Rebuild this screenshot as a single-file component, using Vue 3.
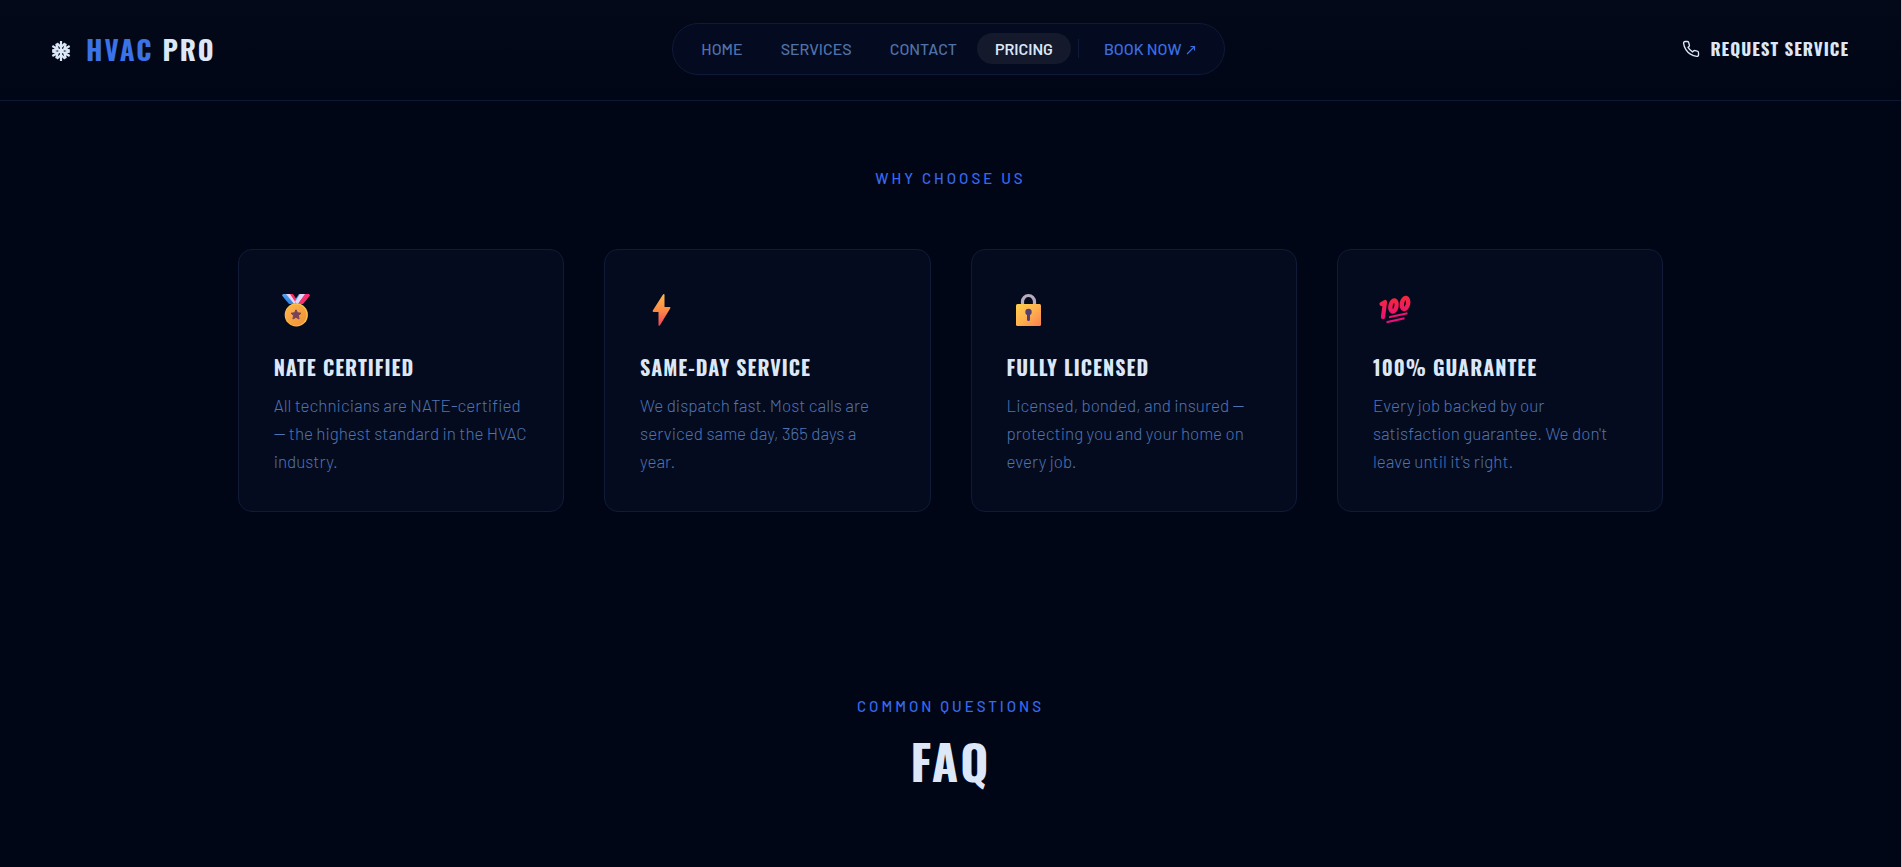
<template>
  <div class="page">
    <header class="site-header">
      <a href="#" class="logo">
        <svg class="logo-icon" viewBox="0 0 22 22" aria-hidden="true">
          <g v-for="a in 6" :key="a" :transform="`rotate(${a * 60} 11 11)`">
            <path d="M11 11V1M11 7.200L7 3.200M11 7.200l4-4" />
          </g>
        </svg>
        <span class="logo-text"><span class="accent">HVAC</span> PRO</span>
      </a>

      <nav class="nav-pill">
        <a
          v-for="link in links"
          :key="link"
          href="#"
          class="nav-link"
          :class="{ active: link === current }"
          @click.prevent="current = link"
        >{{ link }}</a>
        <span class="nav-divider"></span>
        <a href="#" class="nav-link book">
          BOOK NOW
          <svg class="arrow" viewBox="0 0 10 10" aria-hidden="true">
            <path d="M1 9L8.500 1.500M4.500 1.500h4v4" />
          </svg>
        </a>
      </nav>

      <a href="#" class="request">
        <svg class="phone" viewBox="0 0 24 24" aria-hidden="true">
          <path d="M22 16.920v3a2 2 0 0 1-2.180 2 19.790 19.790 0 0 1-8.630-3.070 19.500 19.500 0 0 1-6-6 19.790 19.790 0 0 1-3.070-8.670A2 2 0 0 1 4.110 2h3a2 2 0 0 1 2 1.720 12.840 12.840 0 0 0 .7 2.810 2 2 0 0 1-.45 2.110L8.090 9.910a16 16 0 0 0 6 6l1.270-1.270a2 2 0 0 1 2.110-.45 12.840 12.840 0 0 0 2.810.7A2 2 0 0 1 22 16.920z" />
        </svg>
        REQUEST SERVICE
      </a>
    </header>

    <main>
      <section class="why">
        <p class="eyebrow">WHY CHOOSE US</p>
        <div class="cards">
          <article v-for="card in cards" :key="card.title" class="card">
            <svg v-if="card.icon === 'medal'" class="card-icon" viewBox="0 0 44 44" aria-hidden="true">
              <defs>
                <linearGradient id="ribbonBlue" x1="0" y1="0" x2="0" y2="1">
                  <stop offset="0" stop-color="#4fa4f5" />
                  <stop offset="1" stop-color="#2f7fdc" />
                </linearGradient>
                <linearGradient id="medalGold" x1="0" y1="0" x2="1" y2="1">
                  <stop offset="0" stop-color="#ffb74d" />
                  <stop offset="1" stop-color="#ee8f38" />
                </linearGradient>
              </defs>
              <path d="M9 5h4l7 10h-5L8 6.500z" fill="url(#ribbonBlue)" />
              <path d="M12 5h5l6 9-3 1z" fill="#e3d5f3" />
              <path d="M16 5h3l4 6-1 3z" fill="#f5315f" />
              <path d="M27 5h-2l-4 6 1 4h2z" fill="#4fa4f5" />
              <path d="M32 5h-6l-5 8 3 2z" fill="#e3d5f3" />
              <path d="M35 5h-4l-7 10h5l7-8.500z" fill="#f8306f" />
              <circle cx="22.300" cy="25.900" r="11.600" fill="#ffc24b" />
              <circle cx="21.900" cy="26.100" r="10.600" fill="url(#medalGold)" />
              <path d="M22 20.800l1.500 3 3.500.4-2.600 2.400.7 3.400-3.100-1.700-3.100 1.700.7-3.400-2.600-2.400 3.500-.4z" fill="#79435b" stroke="#79435b" stroke-linejoin="round" />
            </svg>
            <svg v-else-if="card.icon === 'bolt'" class="card-icon" viewBox="0 0 44 44" aria-hidden="true">
              <defs>
                <linearGradient id="boltFill" x1="0" y1="0" x2="0" y2="1">
                  <stop offset="0" stop-color="#ffb84a" />
                  <stop offset="0.500" stop-color="#fd8b45" />
                  <stop offset="1" stop-color="#ee4459" />
                </linearGradient>
              </defs>
              <path d="M23 5.500q1.500-1 1.500.5v12h5q1.300 0 .8 1.200L20 36.200q-1.500 1.300-1.500-.5V23h-5q-1.300-.2-.7-1.400z" fill="url(#boltFill)" />
            </svg>
            <svg v-else-if="card.icon === 'lock'" class="card-icon" viewBox="0 0 44 44" aria-hidden="true">
              <defs>
                <linearGradient id="lockFill" x1="0" y1="0" x2="1" y2="1">
                  <stop offset="0" stop-color="#ffcf4b" />
                  <stop offset="0.500" stop-color="#ffb24f" />
                  <stop offset="1" stop-color="#f9804f" />
                </linearGradient>
              </defs>
              <path d="M15.500 17v-4.500a6 6 0 0 1 12 0V17" fill="none" stroke="#b9aabd" stroke-width="3.200" />
              <rect x="9" y="15" width="25" height="22" rx="1.500" fill="url(#lockFill)" />
              <circle cx="21.500" cy="23" r="3.200" fill="#54406f" />
              <path d="M21.500 24v6.500" stroke="#54406f" stroke-width="3" stroke-linecap="round" />
            </svg>
            <svg v-else class="card-icon" viewBox="0 0 44 44" aria-hidden="true">
              <defs>
                <linearGradient id="hundredFill" gradientUnits="userSpaceOnUse" x1="20" y1="7" x2="22" y2="33">
                  <stop offset="0" stop-color="#f32a38" />
                  <stop offset="1" stop-color="#ef0a82" />
                </linearGradient>
              </defs>
              <g fill="none" stroke="url(#hundredFill)" stroke-linecap="round" stroke-linejoin="round">
                <path d="M8.500 15l3.500-2-2 15" stroke-width="4.200" />
                <ellipse cx="20.500" cy="17" rx="3" ry="5.600" transform="rotate(12 20.500 17)" stroke-width="4.400" />
                <ellipse cx="32" cy="14.500" rx="3.100" ry="5.700" transform="rotate(12 32 14.500)" stroke-width="4.400" />
                <path d="M17 28l16.500-3.500M14.500 33l16-3.500" stroke-width="2.300" />
              </g>
            </svg>
            <h3 class="card-title">{{ card.title }}</h3>
            <p class="card-text">{{ card.text }}</p>
          </article>
        </div>
      </section>

      <section class="faq">
        <p class="eyebrow">COMMON QUESTIONS</p>
        <h2 class="faq-title">FAQ</h2>
      </section>
    </main>
  </div>
</template>

<script setup>
import { ref } from 'vue'

const links = ['HOME', 'SERVICES', 'CONTACT', 'PRICING']
const current = ref('PRICING')

const cards = [
  { icon: 'medal', title: 'NATE CERTIFIED', text: 'All technicians are NATE-certified — the highest standard in the HVAC industry.' },
  { icon: 'bolt', title: 'SAME-DAY SERVICE', text: 'We dispatch fast. Most calls are serviced same day, 365 days a year.' },
  { icon: 'lock', title: 'FULLY LICENSED', text: 'Licensed, bonded, and insured — protecting you and your home on every job.' },
  { icon: 'hundred', title: '100% GUARANTEE', text: "Every job backed by our satisfaction guarantee. We don't leave until it's right." },
]
</script>

<style>
body {
  margin: 0;
  background: #010617;
}
</style>

<style scoped>
.page {
  min-height: 100vh;
  box-sizing: border-box;
  background: #010617;
  border-right: 1px solid #c8ccd8;
  color: #dce8f8;
  font-family: Barlow, Roboto, sans-serif;
}
a { color: inherit; text-decoration: none; }
p, h2, h3 { margin: 0; }

.site-header {
  display: grid;
  grid-template-columns: 1fr auto 1fr;
  align-items: center;
  height: 98px;
  padding: 0 52px 2px 50px;
  background: linear-gradient(#030919, #010617);
  border-bottom: 1px solid #0f1833;
}

.logo { display: flex; align-items: center; gap: 14px; }
.logo-icon { width: 22px; height: 22px; margin-top: 4px; fill: none; stroke: #dce8f8; stroke-width: 2.200; }
.logo-text {
  font: 700 27px/40px Oswald, "Liberation Sans Narrow", sans-serif;
  letter-spacing: 2px;
}
.accent { color: #3b72e8; }

.nav-pill {
  display: flex;
  align-items: center;
  gap: 2px;
  height: 48px;
  padding: 0 10px 2px;
  margin-right: 2px;
  background: #040a20;
  border: 1px solid #0f1a38;
  border-radius: 26px;
}
.nav-link {
  padding: 0 18px;
  border-radius: 16px;
  color: #4f73a8;
  font-size: 16px;
  font-weight: 500;
  line-height: 31px;
}
.nav-link.active { background: #14192c; color: #dce8f8; font-weight: 600; }
.nav-link.book { color: #3b6fe0; }
.nav-divider { width: 1px; height: 19px; margin: 0 5px; background: #0f1a38; }
.arrow { width: 10px; height: 10px; margin-left: 1px; fill: none; stroke: currentColor; stroke-width: 1.200; }

.request {
  display: flex;
  align-items: center;
  justify-self: end;
  gap: 10px;
  font: 700 17px/24px Oswald, "Liberation Sans Narrow", sans-serif;
  letter-spacing: 1px;
}
.phone { width: 18px; height: 18px; fill: none; stroke: currentColor; stroke-width: 1.800; }

.eyebrow {
  color: #3869ee;
  font-size: 15px;
  font-weight: 500;
  line-height: 24px;
  letter-spacing: 3px;
  text-align: center;
}

.why { padding: 65px 12.5% 0; }
.cards {
  display: grid;
  grid-template-columns: repeat(4, 1fr);
  gap: 40px;
  margin-top: 59px;
}
.card {
  padding: 36px 35px;
  background: #050b1f;
  border: 1px solid #101b38;
  border-radius: 14px;
}
.card-icon { display: block; width: 44px; height: 44px; margin: 3px 0 16px; }
.card-title {
  font: 700 20px/36px Oswald, "Liberation Sans Narrow", sans-serif;
  letter-spacing: 1px;
}
.card-text {
  margin-top: 6px;
  color: #4e73b2;
  font-size: 17px;
  font-weight: 300;
  line-height: 28px;
}

.faq { padding: 182px 0 66px; text-align: center; }
.faq-title {
  margin-top: 8px;
  font: 700 48px/70px Oswald, "Liberation Sans Narrow", sans-serif;
  letter-spacing: 2px;
}
</style>
